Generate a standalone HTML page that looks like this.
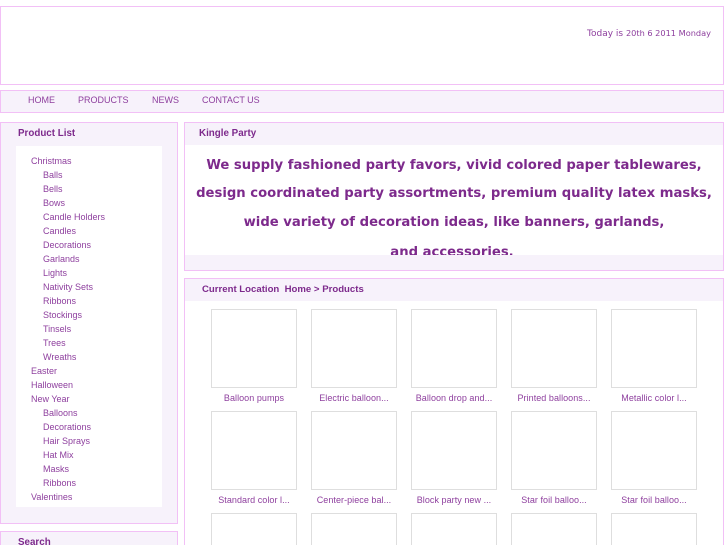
<!DOCTYPE html>
<html><head><meta charset="utf-8">
<style>
html,body{margin:0;padding:0;background:#fff;width:727px;height:545px;overflow:hidden}
#w{position:relative;width:727px;height:545px;overflow:hidden;font-family:"Liberation Sans",sans-serif;color:#8e3f9e;font-size:9px}
.a{position:absolute;box-sizing:border-box}
.b{border:1px solid #f2c0f6}
.t{position:absolute;white-space:nowrap;line-height:14px}
.h{font-weight:bold;color:#7d2a8c;font-size:9.8px}
.big{position:absolute;left:185px;width:538px;text-align:center;font:bold 13.2px/20px "DejaVu Sans",sans-serif;color:#7d2a8c;white-space:nowrap}
.p{position:absolute;width:86px;height:79px;box-sizing:border-box;border:1px solid #dedede}
.c{position:absolute;width:86px;text-align:center;white-space:nowrap;line-height:14px;letter-spacing:.05px}
</style></head><body><div id="w">
<div class="a b" style="left:0;top:6px;width:724px;height:79px"></div>
<div class="t" style="left:587px;top:25.5px;font:9px/14px 'DejaVu Sans',sans-serif">Today is <span style="font-size:8.2px">20th 6 2011 Monday</span></div>
<div class="a b" style="left:0;top:90px;width:724px;height:23px;background:#f7f2fb"></div>
<div class="t" style="left:28px;top:93px">HOME</div>
<div class="t" style="left:78px;top:93px">PRODUCTS</div>
<div class="t" style="left:152px;top:93px">NEWS</div>
<div class="t" style="left:202px;top:93px">CONTACT US</div>

<div class="a b" style="left:0;top:122px;width:178px;height:402px;background:#f7f2fb"></div>
<div class="a" style="left:16px;top:146px;width:146px;height:361px;background:#fff"></div>
<div class="t h" style="left:18px;top:127px">Product List</div>
<div class="t" style="left:31px;top:154px">Christmas</div>
<div class="t" style="left:43px;top:168px">Balls</div>
<div class="t" style="left:43px;top:182px">Bells</div>
<div class="t" style="left:43px;top:196px">Bows</div>
<div class="t" style="left:43px;top:210px">Candle Holders</div>
<div class="t" style="left:43px;top:224px">Candles</div>
<div class="t" style="left:43px;top:238px">Decorations</div>
<div class="t" style="left:43px;top:252px">Garlands</div>
<div class="t" style="left:43px;top:266px">Lights</div>
<div class="t" style="left:43px;top:280px">Nativity Sets</div>
<div class="t" style="left:43px;top:294px">Ribbons</div>
<div class="t" style="left:43px;top:308px">Stockings</div>
<div class="t" style="left:43px;top:322px">Tinsels</div>
<div class="t" style="left:43px;top:336px">Trees</div>
<div class="t" style="left:43px;top:350px">Wreaths</div>
<div class="t" style="left:31px;top:364px">Easter</div>
<div class="t" style="left:31px;top:378px">Halloween</div>
<div class="t" style="left:31px;top:392px">New Year</div>
<div class="t" style="left:43px;top:406px">Balloons</div>
<div class="t" style="left:43px;top:420px">Decorations</div>
<div class="t" style="left:43px;top:434px">Hair Sprays</div>
<div class="t" style="left:43px;top:448px">Hat Mix</div>
<div class="t" style="left:43px;top:462px">Masks</div>
<div class="t" style="left:43px;top:476px">Ribbons</div>
<div class="t" style="left:31px;top:490px">Valentines</div>

<div class="a b" style="left:0;top:531px;width:178px;height:14px;border-bottom:0;background:#f7f2fb;overflow:hidden"><div class="t h" style="left:17px;top:3.5px">Search</div></div>

<div class="a b" style="left:184px;top:122px;width:540px;height:149px;background:#fff"></div>
<div class="a" style="left:185px;top:123px;width:538px;height:22px;background:#f7f2fb"></div>
<div class="t h" style="left:199px;top:127px">Kingle Party</div>
<div class="big" style="top:155px;padding-top:1px">We supply fashioned party favors, vivid colored paper tablewares,</div>
<div class="big" style="top:183px;padding-top:1px">design coordinated party assortments, premium quality latex masks,</div>
<div class="big" style="top:212px;padding-top:1px">wide variety of decoration ideas, like banners, garlands,</div>
<div class="big" style="top:243px;left:183px">and accessories.</div>
<div class="a" style="left:185px;top:255px;width:538px;height:15px;background:#f7f2fb"></div>

<div class="a b" style="left:184px;top:278px;width:540px;height:267px;border-bottom:0;background:#fff"></div>
<div class="a" style="left:185px;top:279px;width:538px;height:22px;background:#f7f2fb"></div>
<div class="t h" style="left:202px;top:282.5px;font-size:9.6px">Current Location&nbsp; Home &gt; Products</div>

<div class="p" style="left:211px;top:309px"></div>
<div class="p" style="left:311px;top:309px"></div>
<div class="p" style="left:411px;top:309px"></div>
<div class="p" style="left:511px;top:309px"></div>
<div class="p" style="left:611px;top:309px"></div>
<div class="c" style="left:211px;top:391px">Balloon pumps</div>
<div class="c" style="left:311px;top:391px">Electric balloon...</div>
<div class="c" style="left:411px;top:391px">Balloon drop and...</div>
<div class="c" style="left:511px;top:391px">Printed balloons...</div>
<div class="c" style="left:611px;top:391px">Metallic color l...</div>

<div class="p" style="left:211px;top:411px"></div>
<div class="p" style="left:311px;top:411px"></div>
<div class="p" style="left:411px;top:411px"></div>
<div class="p" style="left:511px;top:411px"></div>
<div class="p" style="left:611px;top:411px"></div>
<div class="c" style="left:211px;top:493px">Standard color l...</div>
<div class="c" style="left:311px;top:493px">Center-piece bal...</div>
<div class="c" style="left:411px;top:493px">Block party new ...</div>
<div class="c" style="left:511px;top:493px">Star foil balloo...</div>
<div class="c" style="left:611px;top:493px">Star foil balloo...</div>

<div class="p" style="left:211px;top:513px;height:32px;border-bottom:0"></div>
<div class="p" style="left:311px;top:513px;height:32px;border-bottom:0"></div>
<div class="p" style="left:411px;top:513px;height:32px;border-bottom:0"></div>
<div class="p" style="left:511px;top:513px;height:32px;border-bottom:0"></div>
<div class="p" style="left:611px;top:513px;height:32px;border-bottom:0"></div>
</div></body></html>
